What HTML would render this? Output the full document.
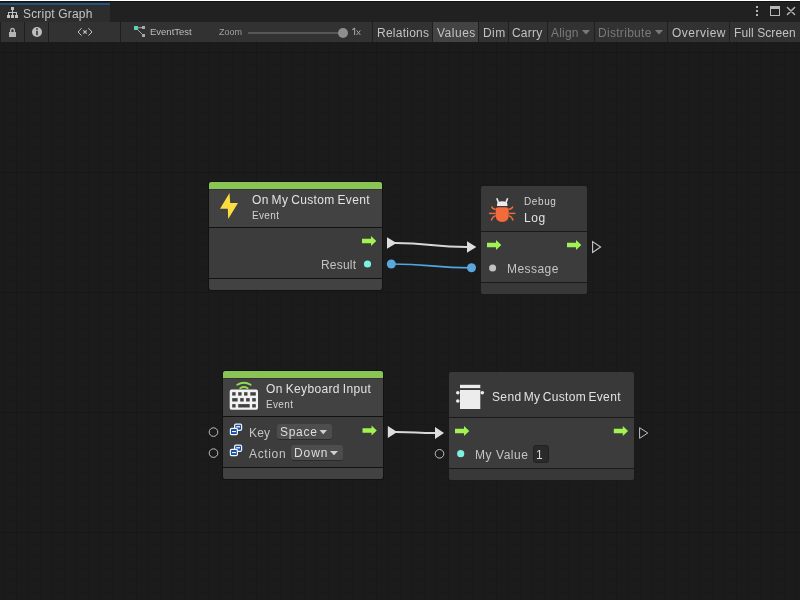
<!DOCTYPE html>
<html><head><meta charset="utf-8">
<style>
*{margin:0;padding:0;box-sizing:border-box;}
html,body{width:800px;height:600px;overflow:hidden;background:#1b1b1b;font-family:"Liberation Sans",sans-serif;-webkit-font-smoothing:antialiased;}
.a{position:absolute;}
.t{position:absolute;white-space:nowrap;line-height:1;will-change:transform;}
#topline{left:0;top:0;width:800px;height:1px;background:#ffffff;}
#tabbar{left:0;top:1px;width:800px;height:21px;background:#212121;border-top:1px solid #111;}
#tab{left:0;top:3px;width:110px;height:19px;background:#2d2d2d;border-top:2px solid #235283;}
#toolbar{left:0;top:22px;width:800px;height:20px;background:#1f1f1f;}
.btn{position:absolute;top:0;height:20px;background:#323232;}
.tb{position:absolute;font-size:12px;color:#c2c2c2;line-height:1;white-space:nowrap;will-change:transform;}
#graph{left:0;top:42px;width:800px;height:558px;background-color:#1b1b1b;
background-image:
linear-gradient(to right,#171717 1px,transparent 1px),
linear-gradient(to bottom,#171717 1px,transparent 1px),
linear-gradient(to right,#191919 1px,transparent 1px),
linear-gradient(to bottom,#191919 1px,transparent 1px);
background-size:120px 120px,120px 120px,12px 12px,12px 12px;
background-position:16px 10px,16px 10px,4px 10px,4px 10px;}
.node{position:absolute;background:#121212;border-radius:3px;}
.node.pl{background:#1a1a1a;}
.pl .hdr{background:#393939;}
.pl .foot{background:#383838;}
.sec{position:absolute;left:1px;right:1px;}
.green{background:#8ac455;}
.hdr{background:#424242;}
.body{background:#3c3c3c;}
.foot{background:#424242;}
.nt{position:absolute;white-space:nowrap;line-height:1;color:#e2e2e2;will-change:transform;}
</style></head><body>
<div id="topline" class="a"></div>
<div id="tabbar" class="a"></div>
<div id="tab" class="a"></div>
<!-- tab icon -->
<svg class="a" style="left:0;top:0" width="20" height="20" viewBox="0 0 20 20" shape-rendering="crispEdges">
<g fill="#c0c0c0"><rect x="11" y="7" width="3" height="3"/><rect x="12" y="10" width="1" height="2"/><rect x="8" y="12" width="9" height="1"/><rect x="8" y="13" width="1" height="2"/><rect x="12" y="13" width="1" height="2"/><rect x="16" y="13" width="1" height="2"/><rect x="7" y="15" width="3" height="3"/><rect x="11" y="15" width="3" height="3"/><rect x="15" y="15" width="3" height="3"/></g></svg>
<div class="t" style="left:23px;top:8px;font-size:12px;color:#c4c4c4;letter-spacing:0.18px">Script Graph</div>
<!-- window icons -->
<svg class="a" style="left:750px;top:4px" width="50" height="16" viewBox="0 0 50 16">
<g fill="#b4b4b4"><rect x="6" y="2" width="2" height="2"/><rect x="6" y="6" width="2" height="2"/><rect x="6" y="10" width="2" height="2"/></g>
<rect x="20.5" y="2.5" width="9" height="9" fill="none" stroke="#b8b8b8" stroke-width="1"/><rect x="20" y="2" width="10" height="3" fill="#b8b8b8"/>
<path d="M37.4 3.4 L44.6 10.6 M44.6 3.4 L37.4 10.6" stroke="#b8b8b8" stroke-width="1.4" stroke-linecap="round"/>
</svg>

<div id="toolbar" class="a">
 <div class="btn" style="left:1px;width:23px"></div>
 <div class="btn" style="left:25px;width:23px"></div>
 <div class="btn" style="left:49px;width:71px"></div>
 <div class="btn" style="left:121px;width:251px"></div>
 <div class="btn" style="left:373px;width:59px"></div>
 <div class="btn" style="left:433px;width:45px;background:#434343"></div>
 <div class="btn" style="left:479px;width:29px"></div>
 <div class="btn" style="left:509px;width:38px"></div>
 <div class="btn" style="left:548px;width:46px"></div>
 <div class="btn" style="left:595px;width:72px"></div>
 <div class="btn" style="left:668px;width:61px"></div>
 <div class="btn" style="left:730px;width:70px"></div>
</div>
<!-- toolbar icons -->
<svg class="a" style="left:0;top:22px" width="200" height="20" viewBox="0 0 200 20">
 <!-- lock -->
 <path d="M10.7 10.5 V8.3 A1.8 1.8 0 0 1 14.3 8.3 V10.5" fill="none" stroke="#b4b4b4" stroke-width="1.4"/>
 <rect x="9" y="10" width="7" height="5" fill="#b4b4b4"/>
 <!-- info -->
 <circle cx="37" cy="10" r="5" fill="#bdbdbd"/>
 <rect x="36.2" y="6.3" width="1.6" height="1.6" fill="#323232"/>
 <rect x="36.2" y="8.8" width="1.6" height="4.4" fill="#323232"/>
 <!-- <x> -->
 <path d="M81.6 6.2 L78 10 L81.6 13.6 M88.4 6.2 L92 10 L88.4 13.6" fill="none" stroke="#c4c4c4" stroke-width="1"/>
 <path d="M83.3 8.3 L86.7 11.7 M86.7 8.3 L83.3 11.7" fill="none" stroke="#c4c4c4" stroke-width="1.1"/>
 <!-- breadcrumb icon -->
 <path d="M136 6 L143.5 5.5 M136 6 L143.5 13.5" stroke="#a8a8a8" stroke-width="1"/>
 <rect x="142" y="4" width="3" height="3" fill="#a8a8a8"/>
 <rect x="142" y="12" width="3" height="3" fill="#a8a8a8"/>
 <rect x="134" y="4" width="4" height="4" fill="#5fcfb5"/>
</svg>
<div class="tb" style="left:150px;top:27px;font-size:9.5px;color:#bdbdbd">EventTest</div>
<div class="tb" style="left:219px;top:27.8px;font-size:9px;color:#a0a0a0">Zoom</div>
<div class="a" style="left:248px;top:32px;width:95px;height:2px;background:#575757"></div>
<div class="a" style="left:338px;top:27.8px;width:10px;height:10px;border-radius:5px;background:#8e8e8e"></div>
<svg class="a" style="left:350px;top:26px" width="14" height="12" viewBox="0 0 14 12"><path d="M4.6 2 V9 M4.6 2 L2.3 3.8" fill="none" stroke="#a4a4a4" stroke-width="1.05"/><path d="M6.6 4.4 L10.4 9 M10.4 4.4 L6.6 9" fill="none" stroke="#a4a4a4" stroke-width="1"/></svg>
<div class="tb" style="left:377px;top:27px;letter-spacing:0.25px">Relations</div>
<div class="tb" style="left:437px;top:27px;letter-spacing:0.5px">Values</div>
<div class="tb" style="left:483px;top:27px;letter-spacing:0.4px">Dim</div>
<div class="tb" style="left:512px;top:27px;letter-spacing:0.2px">Carry</div>
<div class="tb" style="left:551px;top:27px;color:#7a7a7a;letter-spacing:0.2px">Align</div>
<svg class="a" style="left:582px;top:30px" width="9" height="5"><path d="M0 0 H8 L4 4.5Z" fill="#7a7a7a"/></svg>
<div class="tb" style="left:598px;top:27px;color:#7a7a7a;letter-spacing:0.3px">Distribute</div>
<svg class="a" style="left:655px;top:30px" width="9" height="5"><path d="M0 0 H8 L4 4.5Z" fill="#7a7a7a"/></svg>
<div class="tb" style="left:672px;top:27px;letter-spacing:0.5px">Overview</div>
<div class="tb" style="left:734px;top:27px;letter-spacing:0.1px">Full Screen</div>

<div id="graph" class="a"></div>


<!-- NODE 1: On My Custom Event -->
<div class="node" style="left:208px;top:181px;width:175px;height:110px">
 <div class="sec green" style="top:1px;height:7px;border-radius:2px 2px 0 0"></div><div class="sec" style="top:8px;height:1px;background:#35323a"></div>
 <div class="sec hdr" style="top:9px;height:37px"></div>
 <div class="sec body" style="top:47px;height:50px"></div>
 <div class="sec foot" style="top:98px;height:11px;border-radius:0 0 2px 2px"></div>
</div>
<svg class="a" style="left:0;top:0" width="800" height="600" viewBox="0 0 800 600">
 <polygon points="229.5,193 220,208.8 227.8,208.8 228.2,219 238,203 230.2,203" fill="#fddc3f"/>
</svg>
<div class="nt" style="left:252px;top:194px;font-size:12px;letter-spacing:0.35px;word-spacing:-0.8px">On My Custom Event</div>
<div class="nt" style="left:252px;top:211px;font-size:10px;letter-spacing:0.35px;color:#d2d2d2">Event</div>
<div class="nt" style="left:321px;top:259px;font-size:12px;color:#c4c4c4;letter-spacing:0.2px">Result</div>

<!-- NODE 2: Debug Log -->
<div class="node pl" style="left:480px;top:185px;width:108px;height:110px">
 <div class="sec hdr" style="top:1px;height:45px;border-radius:2px 2px 0 0"></div>
 <div class="sec body" style="top:47px;height:50px"></div>
 <div class="sec foot" style="top:98px;height:11px;border-radius:0 0 2px 2px"></div>
</div>
<div class="nt" style="left:524px;top:197px;font-size:10px;letter-spacing:0.6px;color:#d2d2d2">Debug</div>
<div class="nt" style="left:524px;top:212px;font-size:12px;letter-spacing:0.6px">Log</div>
<div class="nt" style="left:507px;top:262.5px;font-size:12px;letter-spacing:0.45px;color:#c4c4c4">Message</div>

<!-- NODE 3: On Keyboard Input -->
<div class="node" style="left:222px;top:370px;width:162px;height:110px">
 <div class="sec green" style="top:1px;height:7px;border-radius:2px 2px 0 0"></div><div class="sec" style="top:8px;height:1px;background:#35323a"></div>
 <div class="sec hdr" style="top:9px;height:37px"></div>
 <div class="sec body" style="top:47px;height:50px"></div>
 <div class="sec foot" style="top:98px;height:11px;border-radius:0 0 2px 2px"></div>
</div>
<div class="nt" style="left:266px;top:383px;font-size:12px;letter-spacing:0.35px;word-spacing:-0.7px">On Keyboard Input</div>
<div class="nt" style="left:266px;top:400px;font-size:10px;letter-spacing:0.35px;color:#d2d2d2">Event</div>
<div class="nt" style="left:249px;top:427px;font-size:12px;color:#c4c4c4;letter-spacing:0.2px">Key</div>
<div class="nt" style="left:249px;top:448px;font-size:12px;letter-spacing:0.65px;color:#c4c4c4">Action</div>
<div class="a" style="left:277px;top:424px;width:55px;height:16px;background:#4d4d4d;border-radius:3px;border-bottom:1px solid #2a2a2a"></div>
<div class="nt" style="left:280px;top:426px;font-size:12px;color:#dedede;letter-spacing:0.7px">Space</div>
<div class="a" style="left:291px;top:445px;width:52px;height:16px;background:#4d4d4d;border-radius:3px;border-bottom:1px solid #2a2a2a"></div>
<div class="nt" style="left:294px;top:447px;font-size:12px;color:#dedede;letter-spacing:0.9px">Down</div>

<!-- NODE 4: Send My Custom Event -->
<div class="node pl" style="left:448px;top:371px;width:187px;height:110px">
 <div class="sec hdr" style="top:1px;height:45px;border-radius:2px 2px 0 0"></div>
 <div class="sec body" style="top:47px;height:50px"></div>
 <div class="sec foot" style="top:98px;height:11px;border-radius:0 0 2px 2px"></div>
</div>
<div class="nt" style="left:492px;top:391px;font-size:12px;letter-spacing:0.35px;word-spacing:-1.4px">Send My Custom Event</div>
<div class="nt" style="left:475px;top:449px;font-size:12px;letter-spacing:0.55px;color:#c4c4c4">My Value</div>
<div class="a" style="left:533px;top:445px;width:16px;height:18px;background:#2a2a2a;border:1px solid #222;border-radius:3px"></div>
<div class="nt" style="left:536px;top:449px;font-size:12px;color:#d8d8d8">1</div>

<!-- overlay: icons, ports, edges -->
<svg class="a" style="left:0;top:0" width="800" height="600" viewBox="0 0 800 600">
 <defs>
  <g id="garrow"><path d="M0 -2.2 H9 V-5 L14.3 0 L9 5 V2.2 H0 Z" fill="#a2f251"/></g>
 </defs>
 <!-- node1 arrow & port -->
 <use href="#garrow" x="362" y="241"/>
 <circle cx="367.5" cy="264" r="3.6" fill="#7cf0e1"/>
 <!-- edges 1 -->
 <path d="M395 243 C430 243, 432 247, 467 247" fill="none" stroke="#d8d8d8" stroke-width="1.8"/>
 <polygon points="387,237.2 396.6,243 387,248.8" fill="#dedede"/>
 <polygon points="467,241.2 476.3,247 467,252.8" fill="#dedede"/>
 <path d="M391.3 264 C431 264, 432 267.8, 471.5 267.8" fill="none" stroke="#52a6de" stroke-width="1.7"/>
 <circle cx="391.3" cy="264" r="4.5" fill="#5aa7de"/>
 <circle cx="471.5" cy="267.8" r="4.5" fill="#5aa7de"/>
 <!-- debug node -->
 <use href="#garrow" x="487" y="245"/>
 <use href="#garrow" x="567" y="245"/>
 <polygon points="592.6,241.6 600.6,247 592.6,252.4" fill="none" stroke="#c8c8c8" stroke-width="1.1"/>
 <circle cx="492.6" cy="268" r="3.5" fill="#c2c2c2"/>
 <!-- bug icon -->
 <g fill="#f46b3b">
  <path d="M495.7 210 Q495.7 207.3 498.5 207.3 H505.9 Q508.7 207.3 508.7 210 V215.5 Q508.7 222 502.2 222 Q495.7 222 495.7 215.5 Z"/>
 </g>
 <g stroke="#f46b3b" stroke-width="1.4" fill="none">
  <path d="M491.6 206.5 Q492.5 209.2 495.7 209.2"/><path d="M512.8 206.5 Q511.9 209.2 508.7 209.2"/>
  <path d="M489 213.4 H495.7"/><path d="M508.7 213.4 H515.4"/>
  <path d="M495.7 215.6 Q492.5 216.5 491.2 220.5"/><path d="M508.7 215.6 Q511.9 216.5 513.2 220.5"/>
 </g>
 <g fill="#ececec">
  <path d="M497 206 V204.5 Q497 201.3 502.2 201.3 Q507.4 201.3 507.4 204.5 V206 Z"/>
 </g>
 <g stroke="#ececec" stroke-width="1.6" fill="none">
  <path d="M496.8 198.3 L498.4 202.6"/><path d="M507.6 198.3 L506 202.6"/>
 </g>
 <!-- keyboard node -->
 <use href="#garrow" x="362.5" y="430.5"/>
 <circle cx="213.5" cy="432.1" r="4.3" fill="none" stroke="#c0c0c0" stroke-width="1"/>
 <circle cx="213.5" cy="453.1" r="4.3" fill="none" stroke="#c0c0c0" stroke-width="1"/>
 <!-- keyboard icon -->
 <rect x="229.7" y="389.6" width="28.3" height="20.1" rx="1.8" fill="#f2f2f2"/>
 <g fill="#424242">
  <rect x="232.2" y="392.2" width="3.4" height="3.4"/><rect x="238.2" y="392.2" width="3.4" height="3.4"/><rect x="244.1" y="392.2" width="3.4" height="3.4"/><rect x="250.3" y="392.2" width="5.5" height="3.4"/>
  <rect x="232.2" y="398.1" width="5.4" height="3.4"/><rect x="240.2" y="398.1" width="3.5" height="3.4"/><rect x="246.1" y="398.1" width="3.6" height="3.4"/><rect x="252.2" y="398.1" width="3.6" height="3.4"/>
  <rect x="232.2" y="404.1" width="3.4" height="3.4"/><rect x="238.2" y="404.1" width="11.5" height="3.4"/><rect x="252.2" y="404.1" width="3.6" height="3.4"/>
 </g>
 <path d="M237.3 384.8 Q243.9 380.8 250.6 384.8" fill="none" stroke="#8fdc4c" stroke-width="1.9" stroke-linecap="round"/>
 <path d="M240.2 388.2 Q243.9 385.8 247.6 388.2" fill="none" stroke="#8fdc4c" stroke-width="1.9" stroke-linecap="round"/>
 <!-- enum icons -->
 <g>
  <rect x="234.6" y="424.2" width="7" height="6.2" rx="1.3" fill="#1450ad" stroke="#f4f4f4" stroke-width="1.2"/>
  <rect x="236.2" y="426.1" width="3.8" height="1.3" fill="#f4f4f4"/>
  <rect x="230.4" y="428.4" width="7" height="6.3" rx="1.2" fill="#1450ad" stroke="#f4f4f4" stroke-width="1.2"/>
  <rect x="232" y="431" width="4" height="1.1" fill="#f4f4f4"/>
  <rect x="234.6" y="445.2" width="7" height="6.2" rx="1.3" fill="#1450ad" stroke="#f4f4f4" stroke-width="1.2"/>
  <rect x="236.2" y="447.1" width="3.8" height="1.3" fill="#f4f4f4"/>
  <rect x="230.4" y="449.4" width="7" height="6.3" rx="1.2" fill="#1450ad" stroke="#f4f4f4" stroke-width="1.2"/>
  <rect x="232" y="452" width="4" height="1.1" fill="#f4f4f4"/>
 </g>
 <!-- dropdown triangles -->
 <polygon points="319.5,430 327,430 323.25,434.2" fill="#d0d0d0"/>
 <polygon points="330,451 338,451 334,455.2" fill="#d0d0d0"/>
 <!-- edge 2 -->
 <path d="M396 432 C415 432, 416 433, 435 433" fill="none" stroke="#d8d8d8" stroke-width="1.8"/>
 <polygon points="387.8,426 397.2,432 387.8,438" fill="#dedede"/>
 <polygon points="435,427 444,433 435,439" fill="#dedede"/>
 <!-- send node -->
 <use href="#garrow" x="455" y="431"/>
 <use href="#garrow" x="613.8" y="431"/>
 <polygon points="639.6,427.7 647.8,433 639.6,438.3" fill="none" stroke="#c0c0c0" stroke-width="1"/>
 <circle cx="439.5" cy="453.8" r="4.3" fill="none" stroke="#c0c0c0" stroke-width="1"/>
 <circle cx="460.7" cy="453.7" r="3.6" fill="#7cf0e1"/>
 <g fill="#ececec">
  <rect x="460" y="384.8" width="20.3" height="3.3"/>
  <rect x="460" y="390" width="20.3" height="19"/>
  <circle cx="457.8" cy="392.8" r="1.8"/><circle cx="457.8" cy="401" r="1.8"/><circle cx="482.3" cy="392.8" r="1.8"/>
 </g>
</svg>
</body></html>
